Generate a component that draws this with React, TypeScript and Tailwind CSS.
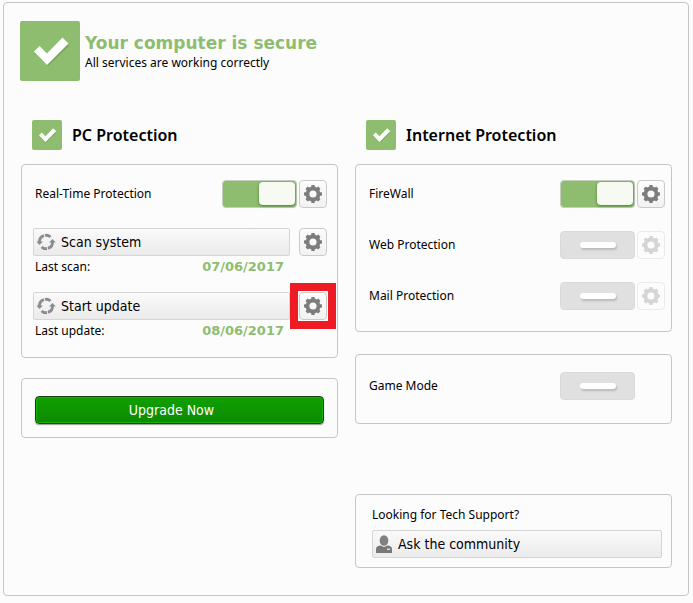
import type { ReactNode } from "react";

function CheckTile({ large = false }: { large?: boolean }) {
  return (
    <svg
      viewBox="0 0 60 60"
      className={
        large
          ? "size-[60px] shrink-0 rounded-xs bg-[#8fbd70]"
          : "size-[30px] shrink-0 rounded-xs bg-[#8fbd70]"
      }
      aria-hidden="true"
    >
      <path d="M15 32l5-5 8 8 15-16 6 6-21 20z" fill="#6f9c52" opacity="0.7" />
      <path d="M14 30.500l5.500-5.500 7.500 7.500L42.500 16.500l6 6L27 44z" fill="#fff" />
    </svg>
  );
}

function GearIcon() {
  const teeth = [0, 45, 90, 135, 180, 225, 270, 315];
  return (
    <svg viewBox="0 0 20 20" className="size-5" aria-hidden="true">
      {teeth.map((angle) => (
        <path
          key={angle}
          d="M7.800 4.500L8.500 1h3l.7 3.500z"
          fill="currentColor"
          transform={`rotate(${angle} 10 10)`}
        />
      ))}
      <circle cx="10" cy="10" r="5.500" fill="none" stroke="currentColor" strokeWidth="3.800" />
    </svg>
  );
}

function RefreshIcon() {
  return (
    <svg viewBox="0 0 20 20" className="size-5 shrink-0" fill="none" aria-hidden="true">
      <g stroke="#8c8c8c" strokeWidth="2.800">
        <path d="M3.500 10.500A6.700 6.700 0 0 1 8 3.600" />
        <path d="M9 3.300a6.700 6.700 0 0 1 5.500 1.800" />
        <path d="M16.500 9.500A6.700 6.700 0 0 1 12 16.400" />
        <path d="M11 16.700a6.700 6.700 0 0 1-5.500-1.800" />
      </g>
      <path d="M.2 9.500h6.800L3.500 13z" fill="#8c8c8c" />
      <path d="M13 10.500h6.800L16.500 7z" fill="#8c8c8c" />
    </svg>
  );
}

function PersonIcon() {
  return (
    <svg viewBox="0 0 18 20" className="h-5 w-[18px] shrink-0" aria-hidden="true">
      <path d="M1 19v-4c0-2 2-3.500 4.500-3.500L9 13l3.500-1.500C15 11.500 17 13 17 15v4z" fill="#777" />
      <ellipse cx="9" cy="6.500" rx="4.300" ry="5.300" fill="#808080" />
      <path d="M12 14.500h3v1.500h-3z" fill="#ddd" />
    </svg>
  );
}

function GearButton({ label, disabled = false }: { label: string; disabled?: boolean }) {
  return (
    <button
      type="button"
      aria-label={label}
      disabled={disabled}
      className="flex h-7 w-7 shrink-0 items-center justify-center rounded-sm border border-[#cacaca] bg-linear-to-b from-[#fcfcfc] to-[#f2f2f2] text-[#7d7d7d] disabled:border-[#ebebeb] disabled:bg-none disabled:text-[#d5d5d5]"
    >
      <GearIcon />
    </button>
  );
}

function Switch({ id, disabled = false }: { id: string; disabled?: boolean }) {
  return (
    <label className="flex shrink-0">
      <input
        id={id}
        type="checkbox"
        role="switch"
        defaultChecked={!disabled}
        disabled={disabled}
        className="sr-only"
      />
      {disabled ? (
        <span className="flex h-7 w-[75px] items-center justify-center rounded-sm border border-[#dadada] bg-[#e0e0e0]">
          <span className="h-1.5 w-9 rounded-sm bg-white shadow-[1px_2px_2px_#bbb]" />
        </span>
      ) : (
        <span className="flex h-7 w-[75px] justify-end rounded-sm border border-[#c5cfbf] bg-[#8fbd70] p-px">
          <span className="h-[23px] w-9 rounded-sm bg-[#f6faf3] shadow-[0_1px_3px_#4c7a30]" />
        </span>
      )}
    </label>
  );
}

function Panel({ className, children }: { className: string; children: ReactNode }) {
  return <div className={`rounded-sm border border-[#c6c6c6] ${className}`}>{children}</div>;
}

function SectionTitle({ children }: { children: ReactNode }) {
  return (
    <div className="flex items-center gap-2.5 pl-[11px]">
      <CheckTile />
      <h2 className="text-[16px] leading-5 font-semibold">{children}</h2>
    </div>
  );
}

function WideButton({ icon, children }: { icon: ReactNode; children: ReactNode }) {
  return (
    <button
      type="button"
      className="flex h-7 w-full items-center gap-[5px] rounded-xs border border-[#d5d5d5] bg-linear-to-b from-[#fafafa] to-[#ebebeb] px-0.5 font-['DejaVu_Sans_Condensed','DejaVu_Sans',sans-serif] text-[14px] leading-5"
    >
      {icon}
      {children}
    </button>
  );
}

function StatusLine({ label, date }: { label: string; date: string }) {
  return (
    <div className="flex h-[22px] items-center justify-between pr-[43px] pl-0.5">
      <span>{label}</span>
      <span className="font-['DejaVu_Sans',sans-serif] text-[13px] font-bold text-[#8fbd70]">{date}</span>
    </div>
  );
}

const internetServices = [
  { id: "firewall", name: "FireWall", disabled: false },
  { id: "web", name: "Web Protection", disabled: true },
  { id: "mail", name: "Mail Protection", disabled: true },
];

export default function App() {
  return (
    <div className="bg-[#fcfcfc] pt-0.5 pr-1 pb-[7px] pl-[3px] font-['Noto_Sans',sans-serif] text-[12px] leading-4 text-black">
      <main className="rounded-sm border border-[#c6c6c6] pt-[18px] pr-4 pb-[27px] pl-4">
        <header className="flex gap-[5px]">
          <CheckTile large />
          <div className="pt-2.5">
            <h1 className="font-['DejaVu_Sans',sans-serif] text-[17px] leading-6 font-bold text-[#8fbd70]">
              Your computer is secure
            </h1>
            <p>All services are working correctly</p>
          </div>
        </header>

        <div className="mt-[39px] grid grid-cols-2 gap-x-[17px] pl-px">
          <section>
            <SectionTitle>PC Protection</SectionTitle>
            <Panel className="mt-3.5 pt-[15px] pr-2.5 pb-[15px] pl-[11px]">
              <div className="flex items-center gap-0.5">
                <label htmlFor="realtime" className="flex-1 pl-0.5">
                  Real-Time Protection
                </label>
                <Switch id="realtime" />
                <GearButton label="Real-time protection settings" />
              </div>
              <div className="mt-5 flex gap-[9px]">
                <WideButton icon={<RefreshIcon />}>Scan system</WideButton>
                <GearButton label="Scan settings" />
              </div>
              <StatusLine label="Last scan:" date="07/06/2017" />
              <div className="mt-3.5 flex gap-[9px]">
                <WideButton icon={<RefreshIcon />}>Start update</WideButton>
                <div className="relative">
                  <GearButton label="Update settings" />
                  <span className="pointer-events-none absolute -inset-[9px] border-8 border-[#ed1c24]" />
                </div>
              </div>
              <StatusLine label="Last update:" date="08/06/2017" />
            </Panel>
            <Panel className="mt-5 px-[13px] pt-[17px] pb-[13px]">
              <button
                type="button"
                className="block h-7 w-full rounded-sm border border-[#173f12] bg-linear-to-b from-[#10a000] to-[#0d8a02] pr-4 text-center font-['DejaVu_Sans_Condensed','DejaVu_Sans',sans-serif] text-[14px] leading-5 text-white shadow-[inset_0_0_0_1px_#17b208,0_1px_1px_#999]"
              >
                Upgrade Now
              </button>
            </Panel>
          </section>

          <section>
            <SectionTitle>Internet Protection</SectionTitle>
            <Panel className="mt-3.5 flex flex-col gap-[23px] pt-[15px] pr-1.5 pb-[21px] pl-[13px]">
              {internetServices.map((service) => (
                <div key={service.id} className="flex items-center gap-0.5">
                  <label htmlFor={service.id} className="flex-1">
                    {service.name}
                  </label>
                  <Switch id={service.id} disabled={service.disabled} />
                  <GearButton label={`${service.name} settings`} disabled={service.disabled} />
                </div>
              ))}
            </Panel>
            <Panel className="mt-[22px] flex items-center justify-between pt-[17px] pr-9 pb-[23px] pl-[13px]">
              <label htmlFor="game">Game Mode</label>
              <Switch id="game" disabled />
            </Panel>
            <Panel className="mt-[70px] pt-3 pr-[9px] pb-[9px] pl-4">
              <p className="mb-[7px]">Looking for Tech Support?</p>
              <WideButton icon={<PersonIcon />}>Ask the community</WideButton>
            </Panel>
          </section>
        </div>
      </main>
    </div>
  );
}
